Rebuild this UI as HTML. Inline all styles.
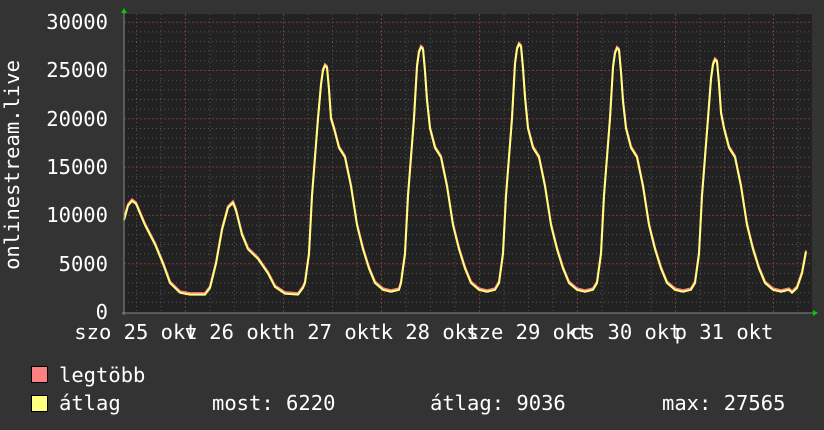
<!DOCTYPE html>
<html><head><meta charset="utf-8"><style>
html,body{margin:0;padding:0;background:#333333;}
svg{display:block}
text{font-family:"DejaVu Sans Mono","Liberation Mono",monospace;fill:#ffffff;font-size:20.5px}
</style></head><body>
<svg id="s" width="824" height="430" viewBox="0 0 824 430" xmlns="http://www.w3.org/2000/svg">
<rect width="824" height="430" fill="#333333"/>
<rect x="124" y="14" width="688" height="299" fill="#222222"/>
<g id="grid"></g>
<path id="mx" fill="none" stroke="#ff8080" stroke-width="2"/>
<path id="av" fill="none" stroke="#ffff80" stroke-width="2"/>
<line x1="122" y1="313" x2="814" y2="313" stroke="#888" stroke-width="1"/>
<line x1="124" y1="12" x2="124" y2="315" stroke="#888" stroke-width="1"/>
<polygon points="121,13 124,8 127,13" fill="#00cc00"/>
<polygon points="813,310 818,313 813,316" fill="#00cc00"/>
<g text-anchor="end">
<text x="108" y="29">30000</text><text x="108" y="77">25000</text><text x="108" y="126">20000</text>
<text x="108" y="174">15000</text><text x="108" y="222">10000</text><text x="108" y="271">5000</text>
<text x="108" y="319">0</text></g>
<text transform="translate(19,165) rotate(-90)" text-anchor="middle">onlinestream.live</text>
<g text-anchor="middle">
<text x="136" y="339">szo 25 okt</text><text x="234" y="339">v 26 okt</text><text x="332" y="339">h 27 okt</text>
<text x="430" y="339">k 28 okt</text><text x="528" y="339">sze 29 okt</text><text x="626" y="339">cs 30 okt</text>
<text x="724" y="339">p 31 okt</text></g>
<rect x="31.5" y="366.5" width="16" height="16" fill="#ff8080" stroke="#000"/>
<rect x="31.5" y="395.5" width="16" height="16" fill="#ffff80" stroke="#000"/>
<text x="59" y="382">legtöbb</text>
<text x="59" y="410">átlag</text>
<text x="212" y="410">most: 6220</text>
<text x="430" y="410">átlag: 9036</text>
<text x="662" y="410">max: 27565</text>
</svg>
<script>
var g=document.getElementById('grid'),h='';
function Y(v){return 312-v*0.00966;}
for(var v=1000;v<=30000;v+=1000){var y=Y(v).toFixed(1);var maj=v%5000==0;
h+='<line x1="124" x2="812" y1="'+y+'" y2="'+y+'" stroke="'+(maj?'#7a3a3a':'#555')+'" stroke-dasharray="'+(maj?'2,2':'1,3')+'"/>';}
for(var x=136.5;x<812;x+=24.5){var d=Math.abs(((x-185)/98)%1)<0.01||Math.abs(((x-185)/98)%1-1)<0.01;
h+='<line y1="14" y2="313" x1="'+x.toFixed(1)+'" x2="'+x.toFixed(1)+'" stroke="'+(d?'#7a3a3a':'#555')+'" stroke-dasharray="'+(d?'2,2':'1,3')+'"/>';}
g.innerHTML=h;
var pts=[[124,9500],[128,11000],[132,11500],[136,11200],[145,9000],[155,7000],[163,5000],[170,3000],[180,2000],[190,1800],[205,1800],[210,2500],[216,5000],[222,8500],[228,10800],[233,11300],[236,10500],[242,8000],[248,6500],[258,5500],[268,4000],[275,2600],[285,1900],[298,1800],[303,2500]];
var peaks=[[325,25500],[421,27400],[519,27700],[617,27300],[715,26100]];
peaks.forEach(function(p){var x0=p[0],P=p[1];
[[-20,3000],[-16,6000],[-13,12000],[-10,16000],[-7,20000],[-4,P-2000],[-2,P-500],[0,P],[2,P-200],[4,P-2500],[6,P-5500],[9,19000],[14,17000],[20,16000],[26,13000],[32,9000],[38,6500],[44,4500],[50,3000],[58,2300],[66,2100],[74,2300]].forEach(function(q){pts.push([x0+q[0],q[1]]);});});
pts=pts.filter(function(p){return p[0]<790});
pts.push([792,2000],[797,2500],[802,4000],[806,6220]);
function path(dy){return 'M'+pts.map(function(p){return p[0]+','+(Y(p[1])+dy).toFixed(1)}).join(' L');}
document.getElementById('mx').setAttribute('d',path(-1.5));
document.getElementById('av').setAttribute('d',path(0));
</script>
</body></html>
